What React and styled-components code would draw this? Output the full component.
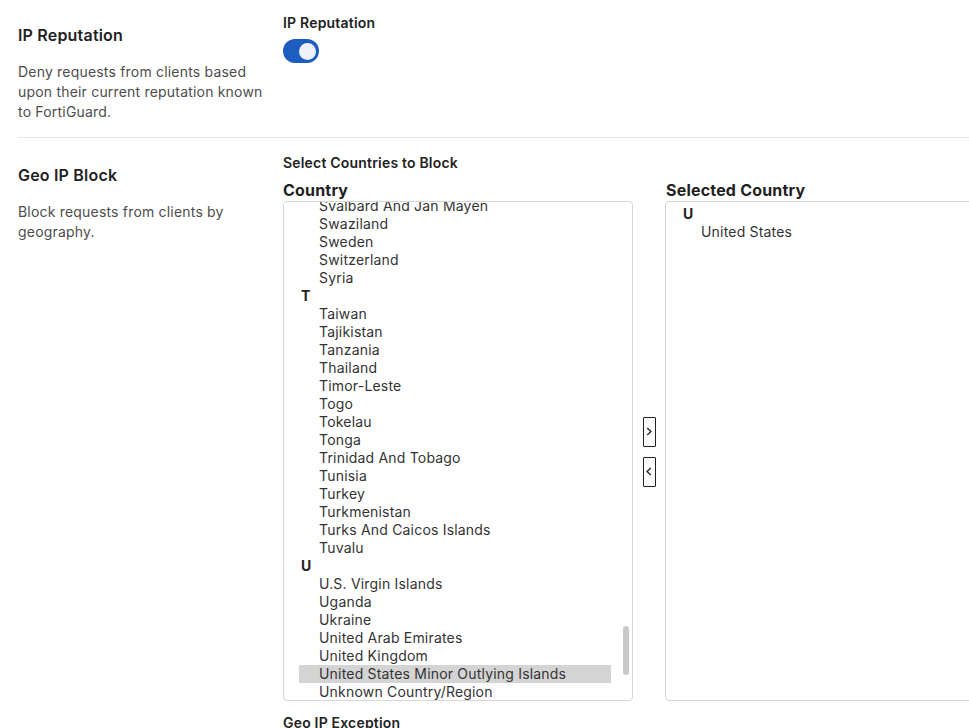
import { useLayoutEffect, useRef, useState } from 'react';
import styled, { createGlobalStyle } from 'styled-components';

const GlobalStyle = createGlobalStyle`
  html, body { margin: 0; padding: 0; background: #fff; overflow: hidden; }
  body {
    font-family: Inter, "Noto Sans", "Liberation Sans", sans-serif;
    color: #222;
    letter-spacing: 0.012em;
    -webkit-font-smoothing: antialiased;
  }
  * { box-sizing: border-box; }
`;

const COUNTRIES = {
  A: 'Afghanistan|Aland Islands|Albania|Algeria|American Samoa|Andorra|Angola|Anguilla|Anonymous Proxy|Antarctica|Antigua And Barbuda|Argentina|Armenia|Aruba|Asia/Pacific Region|Australia|Austria|Azerbaijan',
  B: 'Bahamas|Bahrain|Bangladesh|Barbados|Belarus|Belgium|Belize|Benin|Bermuda|Bhutan|Bolivia|Bonaire, Saint Eustatius And Saba|Bosnia And Herzegovina|Botswana|Bouvet Island|Brazil|British Indian Ocean Territory|British Virgin Islands|Brunei Darussalam|Bulgaria|Burkina Faso|Burundi',
  C: "Cambodia|Cameroon|Canada|Cape Verde|Cayman Islands|Central African Republic|Chad|Chile|China|Christmas Island|Cocos (Keeling) Islands|Colombia|Comoros|Congo|Congo, The Democratic Republic|Cook Islands|Costa Rica|Cote D'Ivoire|Croatia|Cuba|Curacao|Cyprus|Czech Republic",
  D: 'Denmark|Djibouti|Dominica|Dominican Republic',
  E: 'Ecuador|Egypt|El Salvador|Equatorial Guinea|Eritrea|Estonia|Ethiopia|Europe',
  F: 'Falkland Islands (Malvinas)|Faroe Islands|Fiji|Finland|France|French Guiana|French Polynesia|French Southern Territories',
  G: 'Gabon|Gambia|Georgia|Germany|Ghana|Gibraltar|Greece|Greenland|Grenada|Guadeloupe|Guam|Guatemala|Guernsey|Guinea|Guinea-Bissau|Guyana',
  H: 'Haiti|Heard Island And Mcdonald Islands|Holy See (Vatican City State)|Honduras|Hong Kong|Hungary',
  I: 'Iceland|India|Indonesia|Iran|Iraq|Ireland|Isle Of Man|Israel|Italy',
  J: 'Jamaica|Japan|Jersey|Jordan',
  K: 'Kazakhstan|Kenya|Kiribati|Kosovo|Kuwait|Kyrgyzstan',
  L: 'Laos|Latvia|Lebanon|Lesotho|Liberia|Libya|Liechtenstein|Lithuania|Luxembourg',
  M: 'Macao|Macedonia|Madagascar|Malawi|Malaysia|Maldives|Mali|Malta|Marshall Islands|Martinique|Mauritania|Mauritius|Mayotte|Mexico|Micronesia|Moldova|Monaco|Mongolia|Montenegro|Montserrat|Morocco|Mozambique|Myanmar',
  N: 'Namibia|Nauru|Nepal|Netherlands|New Caledonia|New Zealand|Nicaragua|Niger|Nigeria|Niue|Norfolk Island|North Korea|Northern Mariana Islands|Norway',
  O: 'Oman',
  P: 'Pakistan|Palau|Palestinian Territory|Panama|Papua New Guinea|Paraguay|Peru|Philippines|Pitcairn|Poland|Portugal|Puerto Rico',
  Q: 'Qatar',
  R: 'Reunion|Romania|Russian Federation|Rwanda',
  S: 'Saint Barthelemy|Saint Helena|Saint Kitts And Nevis|Saint Lucia|Saint Martin|Saint Pierre And Miquelon|Saint Vincent And The Grenadines|Samoa|San Marino|Sao Tome And Principe|Satellite Provider|Saudi Arabia|Senegal|Serbia|Seychelles|Sierra Leone|Singapore|Sint Maarten|Slovakia|Slovenia|Solomon Islands|Somalia|South Africa|South Georgia And The South Sandwich Islands|South Korea|South Sudan|Spain|Sri Lanka|Sudan|Suriname|Svalbard And Jan Mayen|Swaziland|Sweden|Switzerland|Syria',
  T: 'Taiwan|Tajikistan|Tanzania|Thailand|Timor-Leste|Togo|Tokelau|Tonga|Trinidad And Tobago|Tunisia|Turkey|Turkmenistan|Turks And Caicos Islands|Tuvalu',
  U: 'U.S. Virgin Islands|Uganda|Ukraine|United Arab Emirates|United Kingdom|United States Minor Outlying Islands|Unknown Country/Region|Uruguay|Uzbekistan',
  V: 'Vanuatu|Venezuela|Vietnam',
  W: 'Wallis And Futuna|Western Sahara',
  Y: 'Yemen',
  Z: 'Zambia|Zimbabwe',
};

const SELECTED = { U: ['United States'] };
const HIGHLIGHTED = 'United States Minor Outlying Islands';
const SCROLL_TO = 'Svalbard And Jan Mayen';

const Page = styled.div`
  padding-left: 18px;
  width: 1100px;
`;

const Section = styled.section`
  display: flex;
  padding: ${({ $top }) => $top}px 0 ${({ $bottom }) => $bottom}px;
  border-bottom: ${({ $divider }) => ($divider ? '1px solid #e9e9e9' : 'none')};
`;

const Aside = styled.div`
  width: 265px;
  flex-shrink: 0;
  padding-right: 16px;
  padding-top: 10px;
`;

const SectionTitle = styled.h2`
  margin: 0;
  font-size: 16px;
  line-height: 22px;
  font-weight: 600;
  color: #1f1f1f;
`;

const SectionDesc = styled.p`
  margin: 16px 0 0;
  font-size: 14px;
  line-height: 20px;
  color: #4d4d4d;
`;

const Body = styled.div`
  flex: 1;
  display: flex;
  flex-direction: column;
  align-items: flex-start;
`;

const FieldLabel = styled.div`
  font-size: 14px;
  line-height: 18px;
  font-weight: 600;
  color: #222;
  margin-top: ${({ $mt }) => $mt || 0}px;
`;

const Toggle = styled.button`
  margin-top: 7px;
  width: 36px;
  height: 24px;
  border: none;
  border-radius: 12px;
  background: #1c5dbf;
  padding: 0 3px;
  display: flex;
  align-items: center;
  justify-content: flex-end;
  cursor: pointer;

  &::after {
    content: '';
    width: 17px;
    height: 17px;
    border-radius: 50%;
    background: #eef2f8;
  }
`;

const Picker = styled.div`
  margin-top: 8px;
  display: flex;
  align-items: stretch;
`;

const PickerCol = styled.div`
  display: flex;
  flex-direction: column;
`;

const ColTitle = styled.div`
  font-size: 16px;
  line-height: 20px;
  font-weight: 700;
  color: #1f1f1f;
  padding-left: ${({ $pl }) => $pl || 0}px;
`;

const ListBox = styled.div`
  width: 350px;
  height: 500px;
  margin-top: 1px;
  border: 1px solid #d6d6d6;
  border-radius: 4px;
  overflow: hidden;
  display: flex;
`;

const Viewport = styled.div`
  flex: 1;
  min-width: 0;
  overflow-y: scroll;
  scrollbar-width: none;
  padding: ${({ $pt }) => $pt}px 9px 2px 15px;
`;

const Track = styled.div`
  width: 12px;
  flex-shrink: 0;
  padding: 0 3px;
`;

const Thumb = styled.div`
  width: 6px;
  border-radius: 3px;
  background: #c9c9c9;
`;

const GroupLetter = styled.div`
  font-size: 14px;
  line-height: 18px;
  font-weight: 700;
  color: #222;
  padding-left: 2px;
`;

const Item = styled.div`
  font-size: 14px;
  line-height: 18px;
  color: #333;
  padding-left: 20px;
  white-space: nowrap;
  background: ${({ $active }) => ($active ? '#d4d4d4' : 'transparent')};
`;

const Mover = styled.div`
  width: 32px;
  display: flex;
  flex-direction: column;
  align-items: center;
  justify-content: center;
  gap: 10px;
  padding-top: 22px;
`;

const MoveBtn = styled.button`
  width: 13px;
  height: 30px;
  padding: 0;
  border: 1px solid #222;
  border-radius: 1px;
  background: #fff;
  display: flex;
  align-items: center;
  justify-content: center;
  color: #2a2a2a;
  cursor: pointer;
`;

function Chevron({ dir }) {
  const d = dir === 'right' ? 'M1.2 1 L5 4.5 L1.2 8' : 'M4.8 1 L1 4.5 L4.8 8';
  return (
    <svg width="6" height="9" viewBox="0 0 6 9" fill="none">
      <path d={d} stroke="currentColor" strokeWidth="1.4" />
    </svg>
  );
}

function CountryList({ groups, highlight, scrollTo, padTop = 2 }) {
  const viewRef = useRef(null);
  const [thumb, setThumb] = useState(null);

  const measure = () => {
    const el = viewRef.current;
    if (!el || el.scrollHeight <= el.clientHeight) {
      setThumb(null);
      return;
    }
    const track = el.clientHeight;
    const size = Math.max(24, Math.round((track * track) / el.scrollHeight));
    const ratio = el.scrollTop / (el.scrollHeight - track);
    setThumb({ size, offset: Math.round(ratio * (track - size)) });
  };

  useLayoutEffect(() => {
    const el = viewRef.current;
    if (scrollTo && el) {
      const row = el.querySelector(`[data-name="${scrollTo}"]`);
      if (row) el.scrollTop = row.offsetTop - el.offsetTop + 5;
    }
    measure();
  }, [scrollTo]);

  return (
    <ListBox>
      <Viewport ref={viewRef} onScroll={measure} $pt={padTop}>
        {Object.entries(groups).map(([letter, names]) => (
          <div key={letter}>
            <GroupLetter>{letter}</GroupLetter>
            {names.map((name) => (
              <Item key={name} data-name={name} $active={name === highlight}>
                {name}
              </Item>
            ))}
          </div>
        ))}
      </Viewport>
      {thumb && (
        <Track>
          <Thumb style={{ height: thumb.size, marginTop: thumb.offset }} />
        </Track>
      )}
    </ListBox>
  );
}

export default function App() {
  const available = Object.fromEntries(
    Object.entries(COUNTRIES).map(([k, v]) => [k, v.split('|')])
  );

  return (
    <Page>
      <GlobalStyle />

      <Section $top={14} $bottom={15} $divider>
        <Aside>
          <SectionTitle>IP Reputation</SectionTitle>
          <SectionDesc>
            Deny requests from clients based upon their current reputation known to FortiGuard.
          </SectionDesc>
        </Aside>
        <Body>
          <FieldLabel>IP Reputation</FieldLabel>
          <Toggle aria-label="IP Reputation" />
        </Body>
      </Section>

      <Section $top={16} $bottom={0}>
        <Aside>
          <SectionTitle>Geo IP Block</SectionTitle>
          <SectionDesc>Block requests from clients by geography.</SectionDesc>
        </Aside>
        <Body>
          <FieldLabel>Select Countries to Block</FieldLabel>
          <Picker>
            <PickerCol>
              <ColTitle>Country</ColTitle>
              <CountryList groups={available} highlight={HIGHLIGHTED} scrollTo={SCROLL_TO} />
            </PickerCol>
            <Mover>
              <MoveBtn aria-label="Add"><Chevron dir="right" /></MoveBtn>
              <MoveBtn aria-label="Remove"><Chevron dir="left" /></MoveBtn>
            </Mover>
            <PickerCol>
              <ColTitle $pl={1}>Selected Country</ColTitle>
              <CountryList groups={SELECTED} padTop={3} />
            </PickerCol>
          </Picker>
          <FieldLabel $mt={13}>Geo IP Exception</FieldLabel>
        </Body>
      </Section>
    </Page>
  );
}
